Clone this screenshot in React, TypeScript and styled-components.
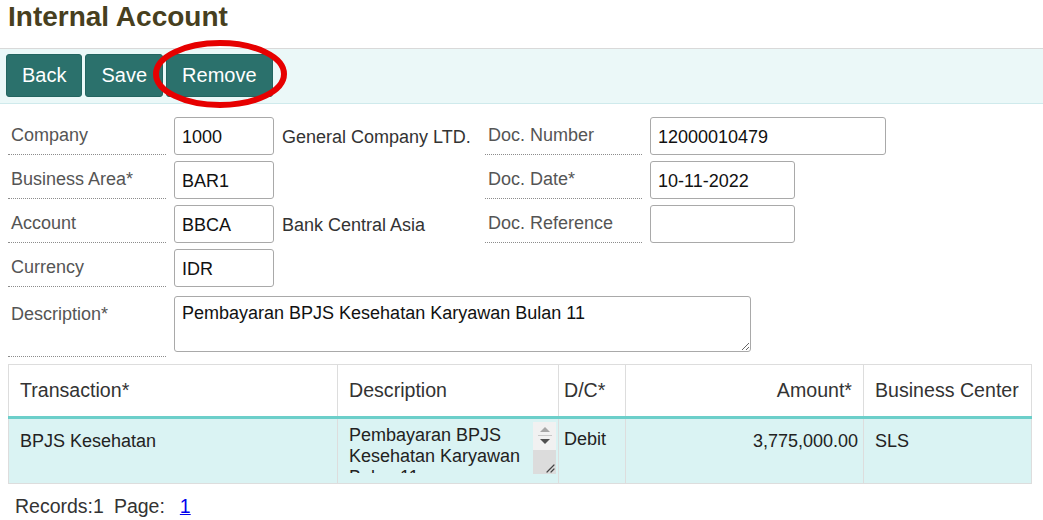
import React from 'react';
import styled, { createGlobalStyle } from 'styled-components';

const GlobalStyle = createGlobalStyle`
  html, body {
    margin: 0;
    padding: 0;
    background: #ffffff;
    font-family: "Liberation Sans", Arial, sans-serif;
  }
`;

const Page = styled.div`
  position: relative;
  width: 1043px;
  height: 520px;
  overflow: hidden;
`;

const Title = styled.h1`
  margin: 0 0 14px;
  padding: 0 8px;
  font-size: 28px;
  line-height: 34px;
  font-weight: bold;
  color: #473f20;
`;

const Toolbar = styled.div`
  display: flex;
  gap: 3px;
  padding: 5px 6px 6px;
  background: #ebf8f8;
  border-top: 1px solid #d9d9d9;
  border-bottom: 1px solid #cfeaec;
`;

const ToolButton = styled.button`
  height: 43px;
  padding: 0 15px;
  background: #2b716c;
  border: 1px solid #236560;
  border-radius: 3px;
  color: #ffffff;
  font-family: "Liberation Sans", Arial, sans-serif;
  font-size: 20px;
  cursor: pointer;
`;

/* red marker drawn over the screenshot */
const Marker = styled.svg`
  position: absolute;
  left: 149px;
  top: 38px;
  pointer-events: none;
`;

const FormGrid = styled.div`
  display: grid;
  grid-template-columns: 158px 100px 195px 157px auto;
  grid-template-rows: repeat(4, 38px) auto;
  column-gap: 8px;
  row-gap: 6px;
  padding: 13px 0 0 8px;
`;

const Label = styled.div<{ $col?: number; $tall?: boolean }>`
  grid-column: ${(p) => p.$col ?? 1};
  display: flex;
  align-items: ${(p) => (p.$tall ? 'flex-start' : 'center')};
  padding: ${(p) => (p.$tall ? '11px 0 0 3px' : '0 0 0 3px')};
  font-size: 18px;
  color: #555555;
  border-bottom: 1px dotted #8c8c8c;
`;

const Field = styled.input<{ $w: number; $col?: number }>`
  grid-column: ${(p) => p.$col ?? 2};
  width: ${(p) => p.$w}px;
  height: 38px;
  box-sizing: border-box;
  padding: 2px 7px 0;
  border: 1px solid #a9a9a9;
  border-radius: 3px;
  font-family: "Liberation Sans", Arial, sans-serif;
  font-size: 18px;
  color: #111111;
  background: #ffffff;
`;

const ValueText = styled.div`
  grid-column: 3;
  display: flex;
  align-items: center;
  padding-top: 2px;
  font-size: 18px;
  color: #333333;
  white-space: nowrap;
`;

const DescArea = styled.textarea`
  grid-column: 2 / 6;
  width: 577px;
  height: 56px;
  margin: 3px 0 5px;
  box-sizing: border-box;
  padding: 6px 7px;
  border: 1px solid #a9a9a9;
  border-radius: 3px;
  font-family: "Liberation Sans", Arial, sans-serif;
  font-size: 18px;
  color: #111111;
`;

const Table = styled.table`
  margin: 7px 0 0 8px;
  width: 1023px;
  border-collapse: collapse;
  table-layout: fixed;
`;

const Th = styled.th<{ $w: number; $align?: string; $pad?: string }>`
  width: ${(p) => p.$w}px;
  height: 53px;
  box-sizing: border-box;
  padding: ${(p) => p.$pad ?? '0 11px'};
  text-align: ${(p) => p.$align ?? 'left'};
  font-size: 19.6px;
  font-weight: normal;
  color: #333333;
  border: 1px solid #dddddd;
  border-bottom: 3px solid #6ccfca;
`;

const Td = styled.td<{ $align?: string; $pad?: string }>`
  height: 66px;
  box-sizing: border-box;
  padding: ${(p) => p.$pad ?? '10px 11px 0'};
  vertical-align: top;
  text-align: ${(p) => p.$align ?? 'left'};
  font-size: 18px;
  color: #222222;
  background: #daf3f3;
  border: 1px solid #dddddd;
  white-space: nowrap;
`;

const CellArea = styled.div`
  display: flex;
  height: 52px;
`;

const CellText = styled.div`
  flex: 1;
  height: 48px;
  overflow: hidden;
  padding-top: 3px;
  font-size: 18px;
  line-height: 21px;
  white-space: normal;
  color: #222222;
`;

const ScrollTrack = styled.div`
  width: 23px;
  display: flex;
  flex-direction: column;
  background: #f1f1f1;
`;

const ScrollArrows = styled.div`
  height: 27px;
  display: flex;
  flex-direction: column;
  align-items: center;
  justify-content: center;
  gap: 3px;
`;

const ScrollGrip = styled.div`
  margin-top: auto;
  height: 24px;
  background: #dcdcdc;
  display: flex;
  align-items: flex-end;
  justify-content: flex-end;
`;

const Pager = styled.div`
  margin-top: 11px;
  padding-left: 15px;
  font-size: 19.5px;
  line-height: 22px;
  color: #333333;
`;

const PagerPart = styled.span`
  margin-left: 10px;
`;

const PageLink = styled.a`
  margin-left: 15px;
  color: #0000ee;
  text-decoration: underline;
`;

const App = () => {
  return (
    <Page>
      <GlobalStyle />
      <Title>Internal Account</Title>
      <Toolbar>
        <ToolButton>Back</ToolButton>
        <ToolButton>Save</ToolButton>
        <ToolButton>Remove</ToolButton>
      </Toolbar>
      <Marker width={142} height={74} viewBox="0 0 142 74">
        <ellipse cx={71} cy={36} rx={64} ry={31} fill="none" stroke="#e60000" strokeWidth={6} />
      </Marker>

      <FormGrid>
        <Label>Company</Label>
        <Field $w={100} defaultValue="1000" />
        <ValueText>General Company LTD.</ValueText>
        <Label $col={4}>Doc. Number</Label>
        <Field $w={236} $col={5} defaultValue="12000010479" />

        <Label>Business Area*</Label>
        <Field $w={100} defaultValue="BAR1" />
        <Label $col={4}>Doc. Date*</Label>
        <Field $w={145} $col={5} defaultValue="10-11-2022" />

        <Label>Account</Label>
        <Field $w={100} defaultValue="BBCA" />
        <ValueText>Bank Central Asia</ValueText>
        <Label $col={4}>Doc. Reference</Label>
        <Field $w={145} $col={5} defaultValue="" />

        <Label>Currency</Label>
        <Field $w={100} defaultValue="IDR" />

        <Label $tall>Description*</Label>
        <DescArea defaultValue="Pembayaran BPJS Kesehatan Karyawan Bulan 11" />
      </FormGrid>

      <Table>
        <thead>
          <tr>
            <Th $w={329}>Transaction*</Th>
            <Th $w={221}>Description</Th>
            <Th $w={67} $pad="0 5px">D/C*</Th>
            <Th $w={238} $align="right">Amount*</Th>
            <Th $w={168}>Business Center</Th>
          </tr>
        </thead>
        <tbody>
          <tr>
            <Td $pad="12px 11px 0">BPJS Kesehatan</Td>
            <Td $pad="3px 2px 0 11px">
              <CellArea>
                <CellText>Pembayaran BPJS Kesehatan Karyawan Bulan 11</CellText>
                <ScrollTrack>
                  <ScrollArrows>
                    <svg width={12} height={6} viewBox="0 0 12 6">
                      <path d="M1 6 L6 1 L11 6 Z" fill="#a6a6a6" />
                    </svg>
                    <svg width={14} height={1} viewBox="0 0 14 1">
                      <rect width={14} height={1} fill="#c8c8c8" />
                    </svg>
                    <svg width={12} height={6} viewBox="0 0 12 6">
                      <path d="M1 0 L6 5 L11 0 Z" fill="#505050" />
                    </svg>
                  </ScrollArrows>
                  <ScrollGrip>
                    <svg width={14} height={14} viewBox="0 0 14 14">
                      <path d="M12 5 L5 12 M12 9 L9 12" stroke="#444" strokeWidth={1.2} strokeLinecap="round" />
                    </svg>
                  </ScrollGrip>
                </ScrollTrack>
              </CellArea>
            </Td>
            <Td $pad="10px 5px 0">Debit</Td>
            <Td $align="right" $pad="12px 5px 0">3,775,000.00</Td>
            <Td $pad="12px 11px 0">SLS</Td>
          </tr>
        </tbody>
      </Table>

      <Pager>
        Records:1<PagerPart>Page:</PagerPart>
        <PageLink href="#">1</PageLink>
      </Pager>
    </Page>
  );
};

export default App;
